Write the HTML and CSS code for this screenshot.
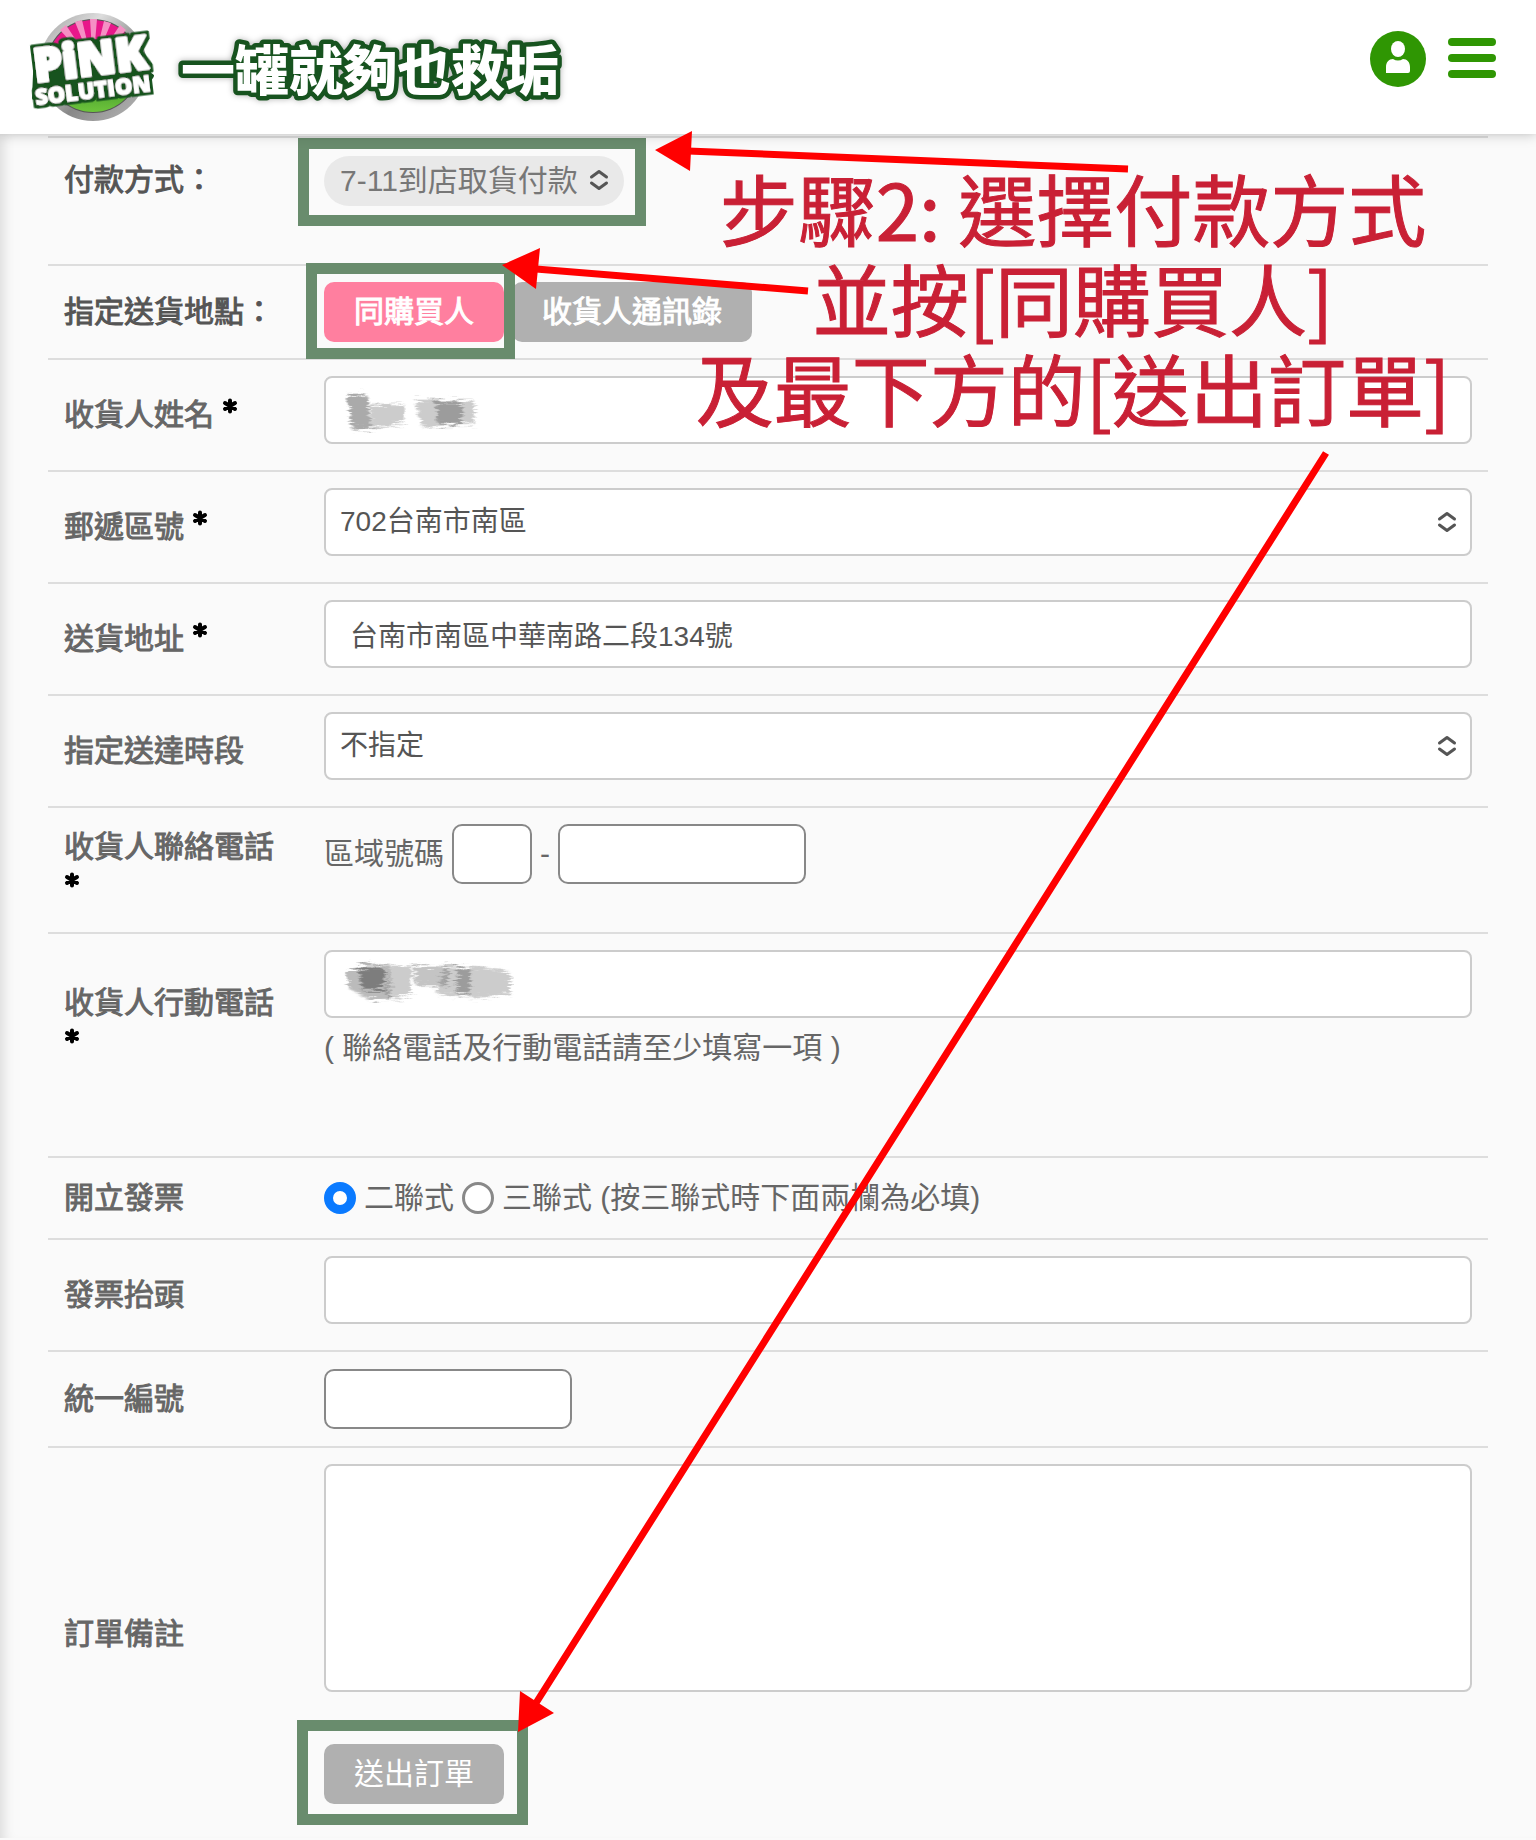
FILE: index.html
```
<!DOCTYPE html>
<html lang="zh-Hant">
<head>
    <meta charset="UTF-8">
    <meta name="viewport" content="width=device-width, initial-scale=1.0">
    <title>Pink Solution 一罐就夠也救垢</title>
    <link rel="stylesheet" href="styles.css">
</head>
<body>

    <svg class="sprite" aria-hidden="true">
        <symbol id="updown" viewBox="0 0 20 24">
            <path d="M2.500 9 10 3.500 17.500 9M2.500 15 10 20.500 17.500 15" fill="none" stroke="currentColor" stroke-width="3" stroke-linecap="round" stroke-linejoin="round"/>
        </symbol>
        <symbol id="star" viewBox="0 0 16 16">
            <path d="M8 2.500v11M3 5l10 6M13 5 3 11" fill="none" stroke="#000" stroke-width="4" stroke-linecap="round"/>
        </symbol>
        <filter id="smear" x="-10%" y="-20%" width="120%" height="140%">
            <feTurbulence type="fractalNoise" baseFrequency="0.06 0.5" numOctaves="3" seed="4" result="noise"/>
            <feGaussianBlur in="SourceGraphic" stdDeviation="1" result="soft"/>
            <feDisplacementMap in="soft" in2="noise" scale="14"/>
        </filter>
    </svg>

    <header class="header">
        <a class="logo" href="#" aria-label="Pink Solution">
            <svg width="570" height="134" viewBox="0 0 570 134">
                <defs>
                    <linearGradient id="ring" x1="0" y1="0" x2="1" y2="1">
                        <stop offset="0" stop-color="#999"/>
                        <stop offset="0.3" stop-color="#ddd"/>
                        <stop offset="0.6" stop-color="#888"/>
                        <stop offset="1" stop-color="#bbb"/>
                    </linearGradient>
                    <linearGradient id="leaf" x1="0" y1="0" x2="0" y2="1">
                        <stop offset="0" stop-color="#2c7d1f"/>
                        <stop offset="1" stop-color="#6dc43c"/>
                    </linearGradient>
                    <filter id="outline" x="-10%" y="-20%" width="120%" height="140%">
                        <feMorphology in="SourceAlpha" operator="dilate" radius="3" result="fat"/>
                        <feFlood flood-color="#17531f"/>
                        <feComposite in2="fat" operator="in" result="edge"/>
                        <feMerge>
                            <feMergeNode in="edge"/>
                            <feMergeNode in="SourceGraphic"/>
                        </feMerge>
                    </filter>
                </defs>
                <circle cx="93" cy="67" r="54" fill="url(#ring)"/>
                <circle cx="93" cy="66" r="47" fill="#555"/>
                <path d="M47 66a46 46 0 0 1 92 0z" fill="#e8178a"/>
                <path d="M93 66 60 30l6-5zM93 66 75 22l7-2zM93 66 90 19h7zM93 66l11-45 7 2zM93 66l27-41 6 5z" fill="#f590c4"/>
                <path d="M47 66a46 46 0 0 0 92 0z" fill="url(#leaf)"/>
                <path d="M36 50 90 42 142 36 140 68 152 76 144 88 34 98z" fill="#17531f" stroke="#17531f" stroke-width="4" stroke-linejoin="round"/>
                <g class="logo-latin" transform="rotate(-7 93 67)" filter="url(#outline)">
                    <text class="logo-pink" x="91" y="75">PiNK</text>
                    <text class="logo-solution" x="90" y="98">SOLUTION</text>
                </g>
                <text class="logo-slogan" x="181" y="91">一罐就夠也救垢</text>
            </svg>
        </a>
        <nav class="header-nav">
            <a href="#" aria-label="會員">
                <svg width="56" height="56" viewBox="0 0 56 56">
                    <circle cx="28" cy="28" r="28" fill="#2f9603"/>
                    <ellipse cx="28" cy="18" rx="7" ry="8" fill="#fff"/>
                    <path d="M16 42v-6c0-5 3-8 7-8q5 3 10 0c4 0 7 3 7 8v4q0 2-2 2z" fill="#fff"/>
                </svg>
            </a>
            <button class="menu-btn" type="button" aria-label="選單">
                <span></span><span></span><span></span>
            </button>
        </nav>
    </header>

    <main class="page">
        <form class="order">
            <div class="row row-pay">
                <label class="label dark" for="pay">付款方式：</label>
                <div class="field">
                    <span class="select-wrap pill">
                        <select id="pay"><option>7-11到店取貨付款</option></select>
                        <svg class="caret"><use href="#updown"/></svg>
                        <i class="mark mark-pay"></i>
                    </span>
                </div>
            </div>

            <div class="row">
                <span class="label dark">指定送貨地點：</span>
                <div class="field buttons">
                    <span class="marked">
                        <button class="btn strong pink" type="button">同購買人</button>
                        <i class="mark mark-same"></i>
                    </span>
                    <button class="btn strong" type="button">收貨人通訊錄</button>
                </div>
            </div>

            <div class="row">
                <label class="label" for="name">收貨人姓名 <svg class="star"><use href="#star"/></svg></label>
                <div class="field tall">
                    <input class="text" id="name" type="text">
                    <svg class="smudge" width="190" height="68">
                        <g filter="url(#smear)" fill="#555">
                            <path d="M24 18h18l6 34-20 2z" opacity="0.5"/>
                            <path d="M46 28h34v20l-32 5z" opacity="0.3"/>
                            <path d="M92 24h58v24l-52 3z" opacity="0.3"/>
                            <path d="M112 26h26v22h-24z" opacity="0.4"/>
                        </g>
                    </svg>
                </div>
            </div>

            <div class="row">
                <label class="label" for="zip">郵遞區號 <svg class="star"><use href="#star"/></svg></label>
                <div class="field tall">
                    <span class="select-wrap wide">
                        <select id="zip"><option>702台南市南區</option></select>
                        <svg class="caret"><use href="#updown"/></svg>
                    </span>
                </div>
            </div>

            <div class="row">
                <label class="label" for="address">送貨地址 <svg class="star"><use href="#star"/></svg></label>
                <div class="field tall">
                    <input class="text" id="address" type="text" value="台南市南區中華南路二段134號">
                </div>
            </div>

            <div class="row">
                <label class="label" for="time">指定送達時段</label>
                <div class="field tall">
                    <span class="select-wrap wide">
                        <select id="time"><option>不指定</option></select>
                        <svg class="caret"><use href="#updown"/></svg>
                    </span>
                </div>
            </div>

            <div class="row row-phone">
                <label class="label" for="phone">收貨人聯絡電話 <svg class="star"><use href="#star"/></svg></label>
                <div class="field phone">
                    <label for="area">區域號碼</label>
                    <input class="box area" id="area" type="text">
                    <span>-</span>
                    <input class="box" id="phone" type="text">
                </div>
            </div>

            <div class="row row-mobile">
                <label class="label" for="mobile">收貨人行動電話 <svg class="star"><use href="#star"/></svg></label>
                <div class="field">
                    <input class="text" id="mobile" type="text">
                    <svg class="smudge" width="190" height="68">
                        <g filter="url(#smear)" fill="#555">
                            <path d="M24 22 40 14h26v34l-20 2-22-12z" opacity="0.4"/>
                            <path d="M34 18h26v22H38z" opacity="0.6"/>
                            <path d="M66 16h22v24l-12 10-14-2z" opacity="0.3"/>
                            <path d="M90 16h34v20H92z" opacity="0.35"/>
                            <path d="M122 16h26l38 6v22l-34 4-40-4z" opacity="0.3"/>
                            <path d="M134 18h12v26h-14z" opacity="0.4"/>
                        </g>
                    </svg>
                    <p class="hint">( 聯絡電話及行動電話請至少填寫一項 )</p>
                </div>
            </div>

            <div class="row row-invoice">
                <span class="label">開立發票</span>
                <div class="field radios">
                    <input type="radio" name="invoice" id="two" checked>
                    <label for="two">二聯式</label>
                    <input type="radio" name="invoice" id="three">
                    <label for="three">三聯式 (按三聯式時下面兩欄為必填)</label>
                </div>
            </div>

            <div class="row">
                <label class="label" for="title">發票抬頭</label>
                <div class="field tall">
                    <input class="text" id="title" type="text">
                </div>
            </div>

            <div class="row row-tax">
                <label class="label" for="taxid">統一編號</label>
                <div class="field">
                    <input class="box" id="taxid" type="text">
                </div>
            </div>

            <div class="row">
                <label class="label" for="note">訂單備註</label>
                <div class="field">
                    <textarea id="note"></textarea>
                    <span class="marked submit">
                        <button class="btn" type="submit">送出訂單</button>
                        <i class="mark mark-submit"></i>
                    </span>
                </div>
            </div>
        </form>
    </main>

    <!-- step notes drawn over the form -->
    <p class="note">步驟2: 選擇付款方式<br>並按[同購買人]<br>及最下方的[送出訂單]</p>
    <svg class="arrows" width="1536" height="1840" viewBox="0 0 1536 1840" aria-hidden="true">
        <g stroke="#f00" stroke-width="7">
            <path d="M688 151 1128 169M536 269 808 291M536 1703 1326 453"/>
        </g>
        <path d="M655 150 692 131 690 171zM502 265 540 248 536 289zM518 1732 520 1691 554 1713z" fill="#f00"/>
    </svg>

</body>
</html>
```
FILE: styles.css
```
* {
    box-sizing: border-box;
}
body {
    margin: 0;
    position: relative;
    background: #fafafa;
    color: #666;
    font-family: "Liberation Sans", "Noto Sans CJK TC", sans-serif;
    font-size: 30px;
    line-height: 36px;
}
input, select, textarea, button {
    font: inherit;
    color: #555;
    margin: 0;
}
svg {
    display: block;
}
.sprite {
    position: absolute;
    width: 0;
    height: 0;
}

/* header */
.header {
    display: flex;
    justify-content: space-between;
    position: relative;
    z-index: 1;
    height: 134px;
    background: #fff;
    box-shadow: 0 0 12px rgba(0, 0, 0, 0.25);
}
.header-nav {
    display: flex;
    align-items: flex-start;
    gap: 22px;
    padding: 31px 40px 0 0;
}
.menu-btn {
    display: flex;
    flex-direction: column;
    gap: 8px;
    width: 48px;
    padding: 7px 0;
    border: 0;
    background: none;
    cursor: pointer;
}
.menu-btn span {
    height: 8px;
    border-radius: 4px;
    background: #2f9603;
}
.logo text {
    fill: #fff;
    stroke-linejoin: round;
    paint-order: stroke;
    font-weight: 900;
}
.logo-latin {
    font-family: "Open Sans", sans-serif;
    stroke: #fff;
    text-anchor: middle;
}
.logo-pink {
    font-size: 46px;
    stroke-width: 3px;
}
.logo-solution {
    font-size: 22px;
    stroke-width: 1px;
}
.logo-slogan {
    font-family: "Noto Sans CJK TC", sans-serif;
    font-size: 54px;
    stroke: #17531f;
    stroke-width: 9px;
    filter: drop-shadow(0 0 3px rgba(0, 0, 0, 0.3));
}

/* order form */
.page {
    padding: 2px 48px 18px;
    box-shadow: inset 12px 0 12px -8px rgba(0, 0, 0, 0.12);
}
.row {
    display: grid;
    grid-template-columns: 260px 1fr;
    align-items: center;
    padding: 16px 0;
    border-top: 2px solid #ddd;
}
.label {
    padding: 0 16px;
    -webkit-text-stroke: 1px currentColor;
}
.dark {
    color: #555;
}
.star {
    display: inline-block;
    width: 16px;
    height: 16px;
    vertical-align: 11px;
}
.field {
    position: relative;
    padding: 0 16px;
}
.tall {
    padding-bottom: 10px;
}
.row-pay {
    align-items: start;
    min-height: 128px;
}
.row-pay .label {
    padding-top: 8px;
}
.row-phone, .row-mobile {
    align-items: start;
}
.row-phone {
    min-height: 126px;
}
.row-mobile {
    min-height: 224px;
}
.row-phone .label, .row-mobile .label {
    line-height: 42px;
}
.row-phone .label {
    padding-top: 2px;
}
.row-mobile .label {
    padding-top: 32px;
}
.row-invoice {
    min-height: 82px;
}
.row-tax {
    min-height: 96px;
}

.text, .wide select {
    display: block;
    width: 100%;
    height: 68px;
    padding: 0 24px;
    border: 2px solid #ccc;
    border-radius: 8px;
    background: #fff;
    font-size: 28px;
}
.select-wrap {
    display: block;
    position: relative;
}
select {
    appearance: none;
}
.wide select {
    padding: 0 14px;
}
.caret {
    position: absolute;
    top: 0;
    bottom: 0;
    right: 15px;
    width: 20px;
    height: 24px;
    margin: auto 0;
    color: #555;
    pointer-events: none;
}
.pill {
    width: 300px;
    padding-top: 2px;
}
.pill select {
    display: block;
    width: 100%;
    height: 50px;
    padding: 0 16px;
    border: 0;
    border-radius: 25px;
    background: #e9e9e9;
    color: #777;
}
.box {
    display: block;
    width: 248px;
    height: 60px;
    padding: 0 16px;
    border: 2px solid #888;
    border-radius: 10px;
    background: #fff;
}
.area {
    width: 80px;
}
.phone {
    display: flex;
    align-items: center;
    gap: 8px;
}
.hint {
    margin: 12px 0 0;
}
.radios {
    display: flex;
    align-items: center;
    gap: 8px;
}
.radios input {
    appearance: none;
    width: 32px;
    height: 32px;
    border: 3px solid #888;
    border-radius: 50%;
    background: #fff;
}
.radios input:checked {
    border: 9px solid #0a7aff;
}
textarea {
    display: block;
    width: 100%;
    height: 228px;
    padding: 16px;
    border: 2px solid #ccc;
    border-radius: 8px;
    background: #fff;
    resize: none;
}
.btn {
    height: 60px;
    padding: 0 30px;
    border: 0;
    border-radius: 10px;
    background: #b0b0b0;
    color: #fff;
    cursor: pointer;
}
.strong {
    -webkit-text-stroke: 1px currentColor;
}
.pink {
    background: #ff7f9f;
}
.buttons {
    display: flex;
    gap: 8px;
}
.marked {
    display: flex;
    position: relative;
    z-index: 1;
    width: max-content;
}
.submit {
    margin-top: 52px;
}
.smudge {
    position: absolute;
    top: 0;
    left: 16px;
}

/* green frames and red notes */
.mark {
    position: absolute;
    border: 11px solid #698c6d;
    pointer-events: none;
}
.mark-pay {
    inset: -16px -22px -20px -26px;
}
.mark-same {
    inset: -19px -11px -17px -18px;
}
.mark-submit {
    inset: -24px -24px -21px -27px;
}
.note {
    position: absolute;
    top: 162px;
    left: 673px;
    z-index: 2;
    width: 800px;
    margin: 0;
    color: #c92035;
    font-family: "Noto Sans CJK TC", sans-serif;
    font-size: 78px;
    -webkit-text-stroke: 1px currentColor;
    line-height: 90px;
    text-align: center;
    pointer-events: none;
}
.arrows {
    position: absolute;
    top: 0;
    left: 0;
    z-index: 2;
    pointer-events: none;
}
```
